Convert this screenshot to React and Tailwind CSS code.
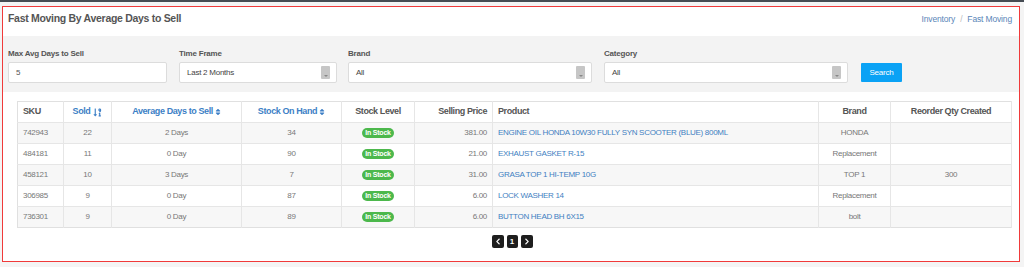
import React from "react";
import { FaSort, FaSortNumericDownAlt, FaChevronLeft, FaChevronRight } from "react-icons/fa";

const rows = [
  { sku: "742943", sold: 22, avg: "2 Days", soh: 34, price: "381.00", product: "ENGINE OIL HONDA 10W30 FULLY SYN SCOOTER (BLUE) 800ML", brand: "HONDA", reorder: "" },
  { sku: "484181", sold: 11, avg: "0 Day", soh: 90, price: "21.00", product: "EXHAUST GASKET R-15", brand: "Replacement", reorder: "" },
  { sku: "458121", sold: 10, avg: "3 Days", soh: 7, price: "31.00", product: "GRASA TOP 1 HI-TEMP 10G", brand: "TOP 1", reorder: "300" },
  { sku: "306985", sold: 9, avg: "0 Day", soh: 87, price: "6.00", product: "LOCK WASHER 14", brand: "Replacement", reorder: "" },
  { sku: "736301", sold: 9, avg: "0 Day", soh: 89, price: "6.00", product: "BUTTON HEAD BH 6X15", brand: "bolt", reorder: "" },
];

function SelectBox({ value, width }) {
  return (
    <div className={`${width} h-[21px] bg-white border border-[#dcdcdc] rounded-[2px] flex items-center justify-between pl-[7px] pr-[6px]`}>
      <span className="text-[8px] tracking-[-0.25px] text-[#444]">{value}</span>
      <span className="w-[9px] h-[13px] bg-[#c6c6c6] rounded-[1px] flex items-end justify-center pb-[2px]">
        <span className="w-0 h-0 border-l-[2px] border-r-[2px] border-t-[2px] border-l-transparent border-r-transparent border-t-[#888]"></span>
      </span>
    </div>
  );
}

function Label({ children }) {
  return <div className="h-[12px] leading-[12px] text-[8px] tracking-[-0.2px] font-bold text-[#555] mb-[3px] pt-[1px]">{children}</div>;
}

export default function App() {
  const th = "h-[21px] px-[5px] text-[9px] tracking-[-0.4px] font-bold border-r border-[#e6e6e6]";
  const td = "h-[21px] px-[5px] text-[8px] tracking-[-0.3px] text-[#777] border-r border-t border-[#e6e6e6]";
  return (
    <div className="w-[1024px] h-[267px] bg-[#f4f4f4] border-t-2 border-[#464c53] pt-[4px] pl-[2px] pr-[4px] font-['Liberation_Sans',Arial,sans-serif]">
      <div className="h-[256px] border border-[#f03a3a] bg-white flex flex-col">
        <div className="h-[29px] flex items-center justify-between pl-[5px] pr-[7px] pb-[5px]">
          <div className="text-[10.5px] tracking-[-0.3px] font-bold text-[#555]">Fast Moving By Average Days to Sell</div>
          <div className="text-[8.5px] tracking-[-0.15px] text-[#5a86b8] flex items-center gap-[5px]">
            <span>Inventory</span>
            <span className="text-[#bbb]">/</span>
            <span>Fast Moving</span>
          </div>
        </div>
        <div className="h-[56px] bg-[#f3f3f3] pt-[11px] pl-[5px] flex items-start">
          <div className="w-[159px]">
            <Label>Max Avg Days to Sell</Label>
            <div className="h-[21px] bg-white border border-[#dcdcdc] rounded-[2px] flex items-center pl-[7px] text-[8px] text-[#555]">5</div>
          </div>
          <div className="w-[158px] ml-[12px]">
            <Label>Time Frame</Label>
            <SelectBox value="Last 2 Months" width="w-[158px]" />
          </div>
          <div className="w-[244px] ml-[11px]">
            <Label>Brand</Label>
            <SelectBox value="All" width="w-[244px]" />
          </div>
          <div className="w-[244px] ml-[12px]">
            <Label>Category</Label>
            <SelectBox value="All" width="w-[244px]" />
          </div>
          <div className="ml-[13px] mt-[16px]">
            <button className="w-[41px] h-[19px] bg-[#0aa2f5] text-white text-[8px] tracking-[-0.2px] rounded-[1px] flex items-center justify-center">Search</button>
          </div>
        </div>
        <div className="flex-1 bg-white pt-[9px] pl-[14px] pr-[7px] flex flex-col">
          <table className="table-fixed border-collapse border border-[#e0e0e0] w-[994px]">
            <colgroup>
              <col className="w-[46px]" />
              <col className="w-[48px]" />
              <col className="w-[130px]" />
              <col className="w-[100px]" />
              <col className="w-[73px]" />
              <col className="w-[78px]" />
              <col className="w-[326px]" />
              <col className="w-[72px]" />
              <col className="w-[121px]" />
            </colgroup>
            <thead>
              <tr className="bg-white">
                <th className={`${th} text-left text-[#555]`}>SKU</th>
                <th className={`${th} text-center text-[#3d7fc6]`}>
                  <span className="inline-flex items-center gap-[3px]">Sold <FaSortNumericDownAlt className="w-[9px] h-[9px] text-[#3d7fc6]" /></span>
                </th>
                <th className={`${th} text-center text-[#3d7fc6]`}>
                  <span className="inline-flex items-center gap-[2px]">Average Days to Sell <FaSort className="w-[6px] h-[8px]" /></span>
                </th>
                <th className={`${th} text-center text-[#3d7fc6]`}>
                  <span className="inline-flex items-center gap-[2px]">Stock On Hand <FaSort className="w-[6px] h-[8px]" /></span>
                </th>
                <th className={`${th} text-center text-[#555]`}>Stock Level</th>
                <th className={`${th} text-right text-[#555]`}>Selling Price</th>
                <th className={`${th} text-left text-[#555]`}>Product</th>
                <th className={`${th} text-center text-[#555]`}>Brand</th>
                <th className={`${th} text-center text-[#555]`}>Reorder Qty Created</th>
              </tr>
            </thead>
            <tbody>
              {rows.map((r, i) => (
                <tr key={r.sku} className={i % 2 === 0 ? "bg-[#f7f7f7]" : "bg-white"}>
                  <td className={`${td} text-left`}>{r.sku}</td>
                  <td className={`${td} text-center`}>{r.sold}</td>
                  <td className={`${td} text-center`}>{r.avg}</td>
                  <td className={`${td} text-center`}>{r.soh}</td>
                  <td className={`${td} text-center`}>
                    <span className="inline-block h-[10px] leading-[10px] px-[3px] rounded-full bg-[#4cb84c] text-white text-[7px] tracking-[-0.2px] font-bold">In Stock</span>
                  </td>
                  <td className={`${td} text-right`}>{r.price}</td>
                  <td className={`${td} text-left !text-[#3f7fc2]`}>{r.product}</td>
                  <td className={`${td} text-center`}>{r.brand}</td>
                  <td className={`${td} text-center`}>{r.reorder}</td>
                </tr>
              ))}
            </tbody>
          </table>
          <div className="mt-[7px] flex justify-center gap-[3px] pr-[5px]">
            <span className="w-[12px] h-[13px] bg-[#1e1e1e] rounded-[2px] flex items-center justify-center">
              <FaChevronLeft className="w-[6px] h-[7px] text-white" />
            </span>
            <span className="w-[11px] h-[13px] bg-[#1e1e1e] rounded-[2px] flex items-center justify-center text-white text-[8px] font-bold">1</span>
            <span className="w-[12px] h-[13px] bg-[#1e1e1e] rounded-[2px] flex items-center justify-center">
              <FaChevronRight className="w-[6px] h-[7px] text-white" />
            </span>
          </div>
        </div>
      </div>
    </div>
  );
}
